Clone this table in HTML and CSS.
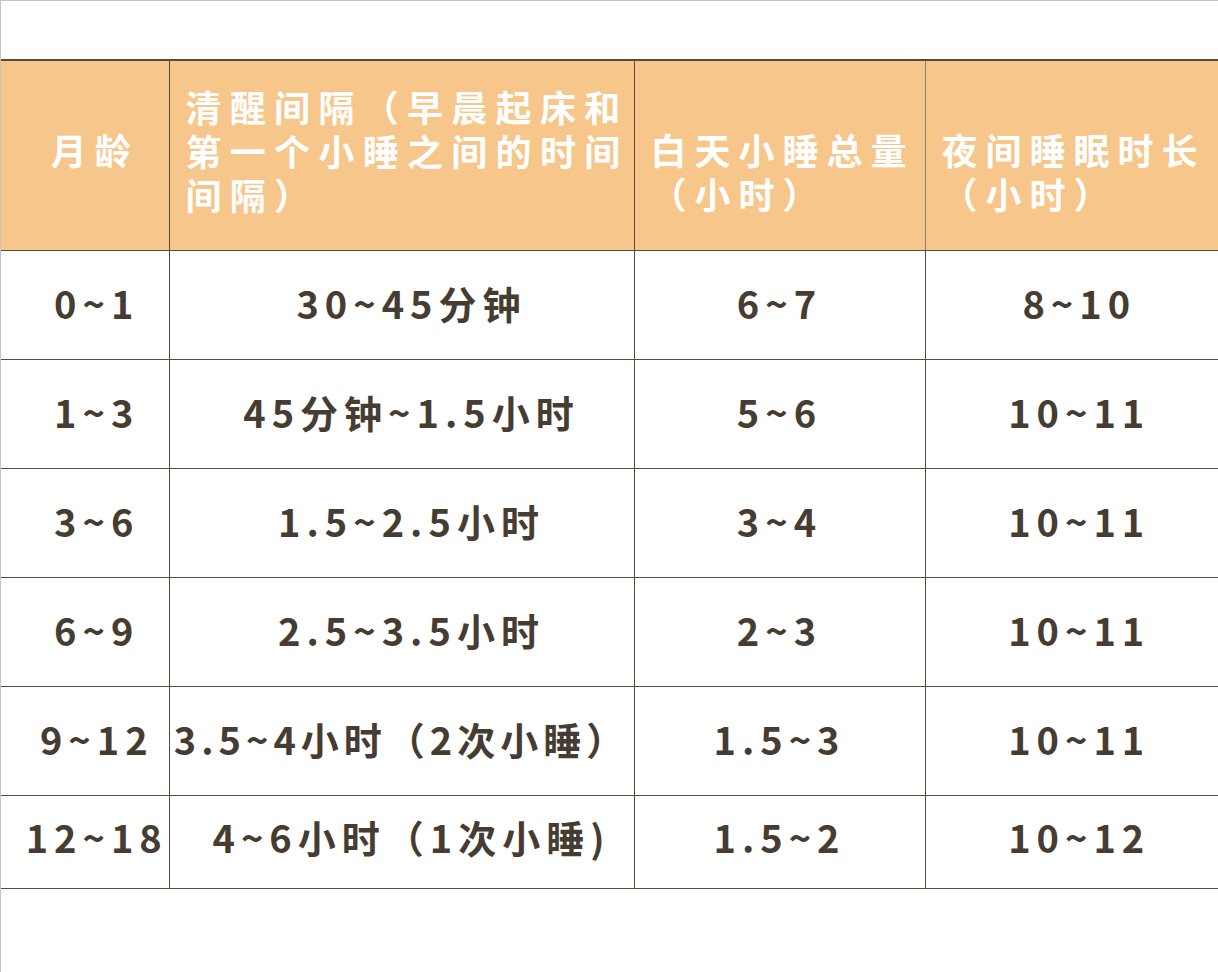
FILE: index.html
```html
<!DOCTYPE html>
<html lang="zh-CN">
<head>
<meta charset="utf-8">
<title>月龄睡眠表</title>
<link rel="stylesheet" href="styles.css">
</head>
<body>
<div class="page">
<table class="sleep">
  <colgroup>
    <col class="c1"><col class="c2"><col class="c3"><col class="c4">
  </colgroup>
  <thead>
    <tr class="head">
      <th class="h1">月龄</th>
      <th class="h2">清醒间隔（早晨起床和第一个小睡之间的时间间隔）</th>
      <th class="h3">白天小睡总量<br>（小时）</th>
      <th class="h3">夜间睡眠时长<br>（小时）</th>
    </tr>
  </thead>
  <tbody>
    <tr><td class="a">0~1</td><td class="b">30~45分钟</td><td>6~7</td><td>8~10</td></tr>
    <tr><td class="a">1~3</td><td class="b">45分钟~1.5小时</td><td>5~6</td><td>10~11</td></tr>
    <tr><td class="a">3~6</td><td class="b">1.5~2.5小时</td><td>3~4</td><td>10~11</td></tr>
    <tr><td class="a">6~9</td><td class="b">2.5~3.5小时</td><td>2~3</td><td>10~11</td></tr>
    <tr><td class="a">9~12</td><td class="b wide">3.5~4小时（2次小睡）</td><td>1.5~3</td><td>10~11</td></tr>
    <tr class="last"><td class="a">12~18</td><td class="b">4~6小时（1次小睡)</td><td>1.5~2</td><td>10~12</td></tr>
  </tbody>
</table>
</div>
</body>
</html>
```
FILE: styles.css
```css
html, body {
  margin: 0;
  padding: 0;
  background: #ffffff;
}
body {
  width: 1218px;
  height: 972px;
  box-sizing: border-box;
  border-top: 1px solid #c4c4c4;
  border-left: 1px solid #c4c4c4;
  overflow: hidden;
  font-family: "Noto Sans CJK SC", "Noto Sans", sans-serif;
}
.page {
  padding-top: 58px;
}
.sleep {
  border-collapse: collapse;
  table-layout: fixed;
  width: 1232px;
  border-top: 2px solid #5b4a38;
}
.c1 { width: 168px; }
.c2 { width: 465px; }
.c3 { width: 291px; }
.c4 { width: 308px; }

.sleep tr.head {
  height: 190px;
}
.sleep th {
  background: #f7c68b;
  color: #ffffff;
  font-size: 36px;
  font-weight: 600;
  line-height: 44px;
  letter-spacing: 8px;
  padding: 0;
  text-align: left;
  vertical-align: middle;
  border-left: 1.5px solid #5b4a38;
  border-bottom: 1.5px solid #5b4a38;
}
.sleep th:first-child { border-left: none; }
.sleep th.h1 {
  text-align: center;
  padding: 0 0 12px 20px;
}
.sleep th.h2 {
  padding: 0 0 11px 16px;
  letter-spacing: 8.3px;
}
.sleep th.h3 {
  padding: 32px 0 0 16px;
}
.sleep th:last-child {
  border-left-color: #8e8172;
}

.sleep td {
  color: #463c31;
  font-size: 38px;
  font-weight: 600;
  letter-spacing: 6px;
  height: 103px;
  padding: 0 0 5px 0;
  text-align: center;
  vertical-align: middle;
  white-space: nowrap;
  border-left: 1.5px solid #5b4a38;
  border-bottom: 1.5px solid #5b4a38;
}
.sleep td:first-child { border-left: none; }
.sleep td.a { padding-left: 24px; }
.sleep td.b { padding-left: 20px; }
.sleep td.b.wide { padding-left: 0; letter-spacing: 5px; }
.sleep tr.last td {
  height: 82px;
  padding-bottom: 10px;
}
.sleep tr.last td.a { padding-left: 24px; }
.sleep tr.last td.b { padding-left: 20px; }
```
